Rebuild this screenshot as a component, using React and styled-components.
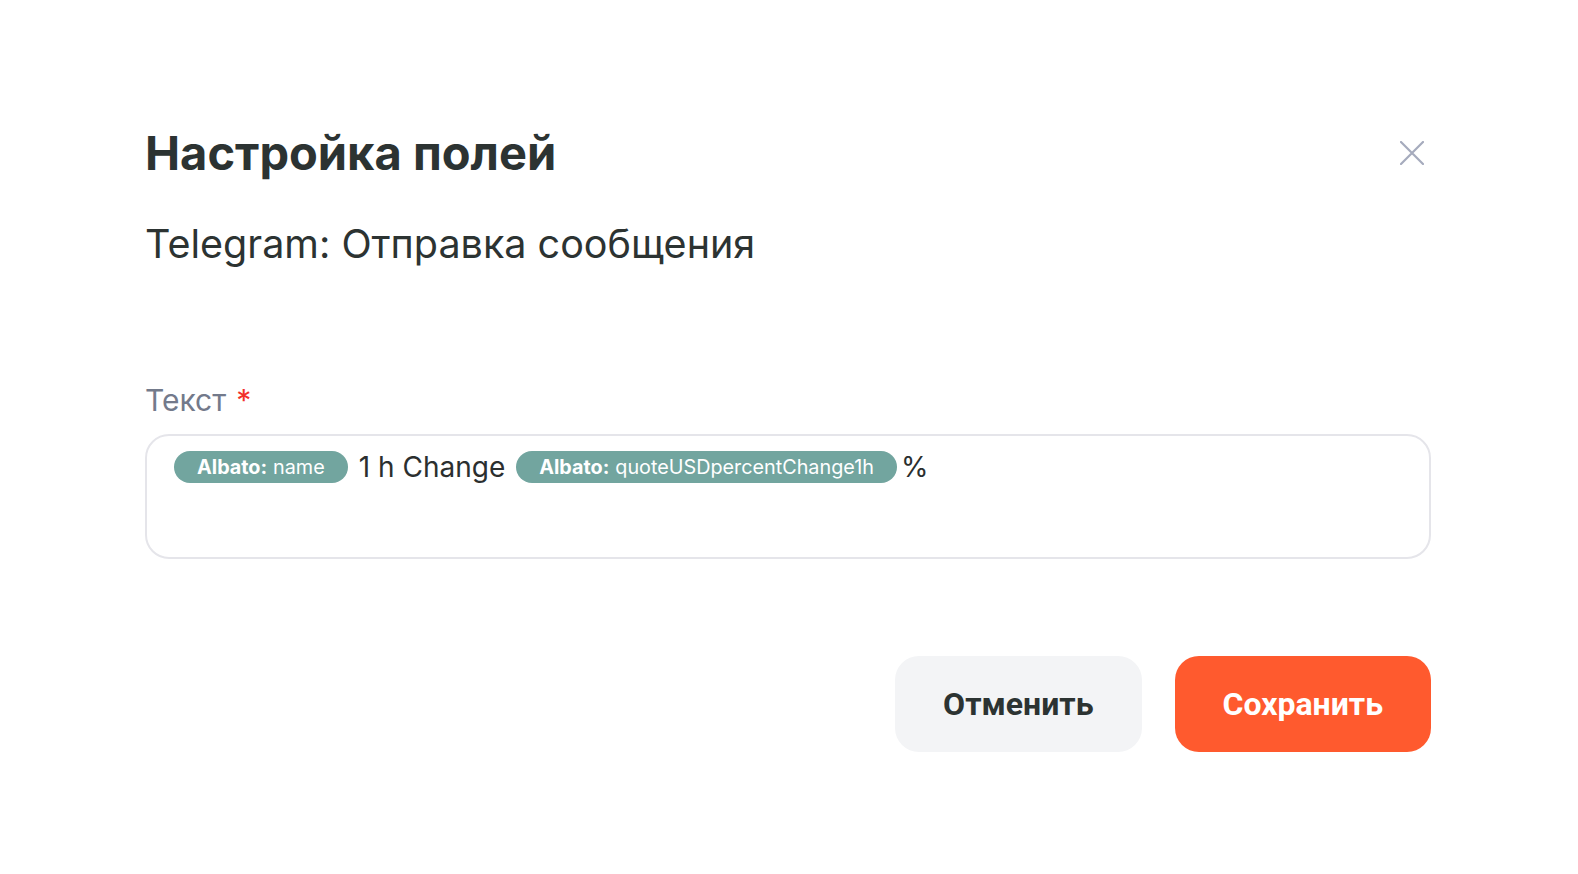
import React from "react";
import styled, { createGlobalStyle } from "styled-components";

const GlobalStyle = createGlobalStyle`
  body {
    margin: 0;
    background: #fff;
    font-family: Inter, "Noto Sans", sans-serif;
  }
`;

const Page = styled.div`
  width: 1578px;
  height: 874px;
  box-sizing: border-box;
  padding: 125px 147px 0 145px;
  background: #fff;
`;

const Header = styled.div`
  display: flex;
  align-items: center;
  justify-content: space-between;
`;

const Title = styled.h1`
  margin: 0;
  font-family: Inter, sans-serif;
  font-weight: 700;
  font-size: 47px;
  line-height: 56px;
  color: #2c3332;
`;

const CloseButton = styled.button`
  width: 34px;
  height: 34px;
  padding: 0;
  margin-right: 2px;
  border: none;
  background: none;
  display: flex;
  align-items: center;
  justify-content: center;
  cursor: pointer;
`;

const Subtitle = styled.h2`
  margin: 39px 0 0;
  font-family: Inter, sans-serif;
  font-weight: 400;
  font-size: 39.5px;
  line-height: 48px;
  color: #2c3332;
`;

const Label = styled.label`
  display: block;
  margin-top: 114px;
  font-size: 30px;
  line-height: 36px;
  color: #737a8b;
`;

const Required = styled.span`
  color: #f2302b;
  margin-left: 10px;
`;

const Field = styled.div`
  margin-top: 16px;
  height: 125px;
  box-sizing: border-box;
  border: 2px solid #e5e5ea;
  border-radius: 24px;
  padding: 13px 27px;
`;

const Line = styled.div`
  display: flex;
  align-items: center;
  flex-wrap: wrap;
  height: 36px;
`;

const Chip = styled.span`
  display: inline-flex;
  align-items: center;
  height: 32px;
  padding: 0 23px;
  border-radius: 16px;
  background: #72a59f;
  color: #fff;
  font-size: 19.8px;
  white-space: nowrap;
  margin-right: ${(p) => p.$gap || 11}px;
`;

const ChipSource = styled.b`
  font-weight: 700;
  margin-right: 6px;
`;

const Plain = styled.span`
  font-size: 28px;
  color: #2b2f2f;
  margin-right: ${(p) => p.$gap || 0}px;
`;

const Actions = styled.div`
  margin-top: 97px;
  display: flex;
  justify-content: flex-end;
  gap: 33px;
`;

const Button = styled.button`
  height: 96px;
  padding: 0 48px;
  border: none;
  border-radius: 24px;
  font-family: Roboto, sans-serif;
  font-weight: 700;
  font-size: 32px;
  cursor: pointer;
  background: ${(p) => (p.$primary ? "#ff5a2e" : "#f3f4f6")};
  color: ${(p) => (p.$primary ? "#fff" : "#2c3332")};
`;

const Tag = ({ field, gap }) => (
  <Chip $gap={gap}>
    <ChipSource>Albato:</ChipSource>
    {field}
  </Chip>
);

export default function App() {
  return (
    <>
      <GlobalStyle />
      <Page>
        <Header>
          <Title>Настройка полей</Title>
          <CloseButton aria-label="Закрыть">
            <svg width="24" height="24" viewBox="0 0 24 24" fill="none">
              <path d="M1 1L23 23M23 1L1 23" stroke="#a6abbd" strokeWidth="2.2" strokeLinecap="round" />
            </svg>
          </CloseButton>
        </Header>
        <Subtitle>Telegram: Отправка сообщения</Subtitle>
        <Label>
          Текст<Required>*</Required>
        </Label>
        <Field>
          <Line>
            <Tag field="name" />
            <Plain $gap={11}>1 h Change</Plain>
            <Tag field="quoteUSDpercentChange1h" gap={4} />
            <Plain>%</Plain>
          </Line>
        </Field>
        <Actions>
          <Button>Отменить</Button>
          <Button $primary>Сохранить</Button>
        </Actions>
      </Page>
    </>
  );
}
